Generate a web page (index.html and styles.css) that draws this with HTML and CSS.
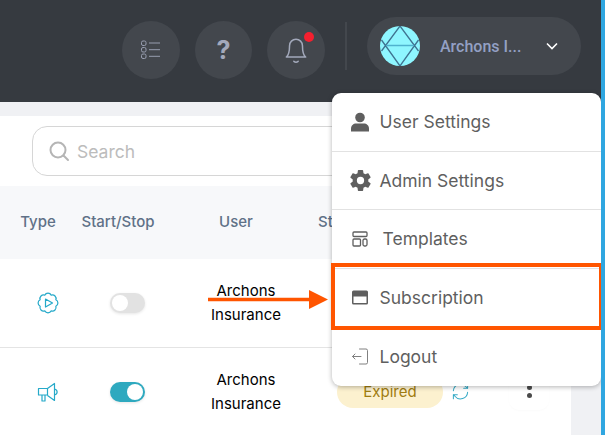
FILE: index.html
```html
<!DOCTYPE html>
<html lang="en">
<head>
<meta charset="UTF-8" />
<title>Campaigns</title>
<link rel="stylesheet" href="styles.css">
</head>
<body>

<div class="page">

  <!-- top bar -->
  <div class="topbar">
    <div class="round-btn">
      <svg width="24" height="24" viewBox="0 0 24 24" fill="none" stroke="#989eb0" stroke-width="1">
        <rect x="2.500" y="3" width="4.500" height="4.500" rx="1.500"/>
        <rect x="2.500" y="9.500" width="4.500" height="4.500" rx="1.500"/>
        <rect x="2.500" y="16" width="4.500" height="4.500" rx="1.500"/>
        <path d="M10 5h11M10 11.700h11M10 18.300h11"/>
      </svg>
    </div>
    <div class="round-btn help">?</div>
    <div class="round-btn">
      <svg width="26" height="28" viewBox="0 0 24 26" fill="none" stroke="#a3a9bb" stroke-width="1.400" stroke-linecap="round" stroke-linejoin="round">
        <path d="M6 9a6 6 0 0 1 12 0c0 6 1 9 3 10.500H3C5 18 6 15 6 9Z"/>
        <path d="M10 23.500c1 .8 3 .8 4 0"/>
      </svg>
      <span class="dot"></span>
    </div>
    <div class="divider"></div>
    <div class="account">
      <svg class="avatar" width="40" height="40" viewBox="0 0 40 40">
        <circle cx="20" cy="20" r="20" fill="#8ef6ff"/>
        <path d="M20 0 1.500 25M20 0l18.500 25M20 40 1.500 14M20 40l18.500-26" stroke="#3f7391" stroke-width="1.300" fill="none"/>
        <path d="M6 19.500h28" stroke="#4fb2cf" stroke-width="1.500"/>
      </svg>
      <span class="account-name">Archons I...</span>
      <svg width="12" height="8" viewBox="0 0 12 8" fill="none" stroke="#fff" stroke-width="1.600">
        <path d="M1 1.500l5 5 5-5"/>
      </svg>
    </div>
  </div>

  <div class="content">
    <div class="card">
      <div class="search-row">
        <div class="search">
          <svg width="22" height="22" viewBox="0 0 22 22" fill="none" stroke="#b5b5b5" stroke-width="2" stroke-linecap="round">
            <circle cx="10" cy="10" r="7.500"/>
            <path d="M15.500 15.500l4.500 4.500"/>
          </svg>
          <span>Search</span>
        </div>
      </div>

      <div class="row head">
        <div class="col-type">Type</div>
        <div class="col-toggle">Start/Stop</div>
        <div class="col-user">User</div>
        <div class="col-status">Status</div>
      </div>

      <div class="row">
        <div class="col-type">
          <svg width="24" height="24" viewBox="0 0 24 24" fill="none" stroke="#25a9c9" stroke-width="1.200" stroke-linejoin="round">
            <path d="M15.250 4.150A3.600 3.600 0 0 1 19.850 8.750 3.600 3.600 0 0 1 19.850 15.250 3.600 3.600 0 0 1 15.250 19.850 3.600 3.600 0 0 1 8.750 19.850 3.600 3.600 0 0 1 4.150 15.250 3.600 3.600 0 0 1 4.150 8.750 3.600 3.600 0 0 1 8.750 4.150 3.600 3.600 0 0 1 15.250 4.150Z"/>
            <path d="M9.500 8l7 4-7 4z"/>
          </svg>
        </div>
        <div class="col-toggle"><div class="toggle"></div></div>
        <div class="col-user">Archons<br>Insurance</div>
      </div>

      <div class="row">
        <div class="col-type">
          <svg width="22" height="22" viewBox="0 0 22 22" fill="none" stroke="#25a9c9" stroke-width="1.200" stroke-linejoin="round">
            <path d="M1.500 7.500h9v6.500h-9zM10.500 7.500l7-5v17l-7-5M5 14v6h3v-6M17.500 8c3.500 1 3.500 5 0 6"/>
          </svg>
        </div>
        <div class="col-toggle"><div class="toggle on"></div></div>
        <div class="col-user">Archons<br>Insurance</div>
        <div class="col-status">
          <span class="pill">Expired</span>
          <svg width="19" height="19" viewBox="0 0 24 24" fill="none" stroke="#35aac6" stroke-width="1.300" stroke-linecap="round" stroke-linejoin="round">
            <path d="M3 11a9 9 0 0 1 16-5l2 2M21 3v5h-5M21 13a9 9 0 0 1-16 5l-2-2M3 21v-5h5"/>
          </svg>
          <div class="more"><i></i><i></i></div>
        </div>
      </div>
    </div>
    <div class="gutter"></div>
  </div>

  <!-- account dropdown -->
  <div class="menu">
    <div class="menu-item">
      <svg width="20" height="20" viewBox="0 0 20 20" fill="#5f5f5f">
        <circle cx="10" cy="5.500" r="4.800"/>
        <path d="M1 19.500v-3c0-3 2.500-5 5-5h8c2.500 0 5 2 5 5v3z"/>
      </svg>
      <span>User Settings</span>
    </div>
    <div class="menu-item">
      <svg class="gear" width="25" height="25" viewBox="0 0 24 24" fill="#5f5f5f">
        <path d="M12 15.500A3.500 3.500 0 0 1 8.500 12 3.500 3.500 0 0 1 12 8.500a3.500 3.500 0 0 1 3.500 3.500 3.500 3.500 0 0 1-3.500 3.500m7.430-2.530c.04-.32.07-.64.07-.97s-.03-.66-.07-1l2.110-1.630c.19-.15.24-.42.12-.64l-2-3.460c-.12-.22-.39-.31-.61-.22l-2.490 1c-.52-.39-1.060-.73-1.690-.98l-.37-2.650A.506.506 0 0 0 14 2h-4c-.25 0-.46.18-.5.42l-.37 2.650c-.63.25-1.170.59-1.690.98l-2.490-1c-.22-.09-.49 0-.61.22l-2 3.460c-.13.22-.07.49.12.64L4.570 11c-.04.34-.07.67-.07 1s.03.65.07.97l-2.110 1.660c-.19.15-.25.42-.12.64l2 3.460c.12.22.39.3.61.22l2.490-1.010c.52.4 1.060.74 1.690.99l.37 2.650c.04.24.25.42.5.42h4c.25 0 .46-.18.5-.42l.37-2.650c.63-.26 1.170-.59 1.690-.99l2.490 1.010c.22.08.49 0 .61-.22l2-3.460c.12-.22.07-.49-.12-.64l-2.110-1.660Z"/>
      </svg>
      <span>Admin Settings</span>
    </div>
    <div class="menu-item templates">
      <svg width="16" height="16" viewBox="0 0 16 16" fill="none" stroke="#5f5f5f" stroke-width="1.300">
        <rect x="1" y="1" width="14" height="4.500" rx="1"/>
        <rect x="1" y="8" width="7.500" height="7" rx="1"/>
        <rect x="11" y="8" width="4" height="7" rx="1.500"/>
      </svg>
      <span>Templates</span>
    </div>
    <div class="menu-item">
      <svg width="17" height="15" viewBox="0 0 17 15" fill="#5f5f5f">
        <path fill-rule="evenodd" d="M2 .5h13a1.500 1.500 0 0 1 1.500 1.500v11a1.500 1.500 0 0 1-1.500 1.500H2A1.500 1.500 0 0 1 .5 13V2A1.500 1.500 0 0 1 2 .5Zm0 6v6.500h13V6.500Z"/>
      </svg>
      <span>Subscription</span>
    </div>
    <div class="menu-item">
      <svg width="17" height="17" viewBox="0 0 17 17" fill="none" stroke="#808080" stroke-width="1" stroke-linecap="round" stroke-linejoin="round">
        <path d="M8 1h6.500a1.500 1.500 0 0 1 1.500 1.500v12a1.500 1.500 0 0 1-1.500 1.500H8M9.500 8.500H1M3.500 6 1 8.500 3.500 11"/>
      </svg>
      <span>Logout</span>
    </div>
  </div>

  <!-- annotation drawn over the screenshot -->
  <div class="highlight"></div>
  <svg class="pointer" width="120" height="19" viewBox="0 0 120 19" fill="#ff5500">
    <path d="M0 7.700h101V0l19 9.500-19 9.500v-7.700H0z"/>
  </svg>

</div>

</body>
</html>
```

FILE: styles.css
```css
* {
  box-sizing: border-box;
}
body {
  margin: 0;
  font-family: Inter, "Noto Sans", sans-serif;
  background: #fff;
}
.page {
  position: relative;
  width: 605px;
  height: 435px;
  overflow: hidden;
  border-right: 4px solid #2fa6e0;
  display: flex;
  flex-direction: column;
}

/* top bar */
.topbar {
  height: 102px;
  flex-shrink: 0;
  background: #363a40;
  display: flex;
  align-items: flex-start;
  justify-content: flex-end;
  padding: 17px 20px 0 0;
}
.round-btn {
  position: relative;
  width: 58px;
  height: 58px;
  margin: 4px 0 0 15px;
  border-radius: 50%;
  background: #43474d;
  display: flex;
  align-items: center;
  justify-content: center;
}
.help {
  width: 57px;
  color: #a3a9bb;
  font-size: 25px;
  font-weight: 700;
}
.dot {
  position: absolute;
  top: 11px;
  right: 11px;
  width: 10px;
  height: 10px;
  border-radius: 50%;
  background: #f5202f;
}
.divider {
  width: 2px;
  height: 48px;
  margin: 5px 20px 0;
  background: #43474d;
}
.account {
  width: 214px;
  height: 58px;
  border-radius: 29px;
  background: #43474d;
  display: flex;
  align-items: center;
  padding-left: 13px;
}
.avatar {
  margin-right: 20px;
}
.account-name {
  width: 106px;
  color: #93a0c4;
  font-family: Roboto, sans-serif;
  font-size: 16px;
  font-weight: 500;
}

/* main area */
.content {
  flex: 1;
  display: flex;
  padding-top: 14px;
  background: #f0f1f4;
}
.card {
  flex: 1;
  background: #fff;
}
.gutter {
  width: 30px;
}
.search-row {
  height: 70px;
  padding: 10px 0 0 32px;
}
.search {
  width: 500px;
  height: 50px;
  border: 1px solid #d6d6d6;
  border-radius: 15px;
  display: flex;
  align-items: center;
  gap: 7px;
  padding-left: 15px;
  color: #bcbcbc;
  font-size: 17.500px;
}

/* table */
.row {
  height: 89px;
  padding-left: 10px;
  display: flex;
  align-items: center;
  color: #000;
  font-size: 15px;
  line-height: 24px;
  border-bottom: 1px solid #e4e4e4;
}
.row:last-child {
  height: 87px;
  border-bottom: 0;
}
.head {
  height: 73px;
  padding: 0 0 2px;
  background: #f7f8fa;
  color: #5f7187;
  font-weight: 500;
  border-bottom: 0;
}
.col-type,
.col-toggle,
.col-user {
  display: flex;
  justify-content: center;
  text-align: center;
}
.col-type {
  width: 76px;
}
.col-toggle {
  width: 84px;
}
.col-user {
  width: 152px;
}
.head .col-user {
  display: block;
}
.col-status {
  margin-left: 6px;
  display: flex;
  align-items: center;
}
.row:last-child .col-status {
  margin-left: 15px;
}
.toggle {
  position: relative;
  width: 35px;
  height: 20px;
  margin-right: 2px;
  border-radius: 10px;
  background: #e2e2e2;
  box-shadow: 0 1px 3px rgba(0,0,0,0.1);
}
.toggle::after {
  content: "";
  position: absolute;
  top: 2px;
  left: 2px;
  width: 16px;
  height: 16px;
  border-radius: 50%;
  background: #fff;
}
.toggle.on {
  background: #2ea9bf;
}
.toggle.on::after {
  left: 17px;
}
.pill {
  width: 106px;
  height: 32px;
  margin-right: 8px;
  border-radius: 16px;
  background: #fcf1cf;
  color: #a07c10;
  display: flex;
  align-items: center;
  justify-content: center;
}
.more {
  width: 40px;
  height: 36px;
  margin-left: 39px;
  border-radius: 10px;
  box-shadow: 0 1px 2px rgba(0,0,0,0.02);
  display: flex;
  flex-direction: column;
  align-items: center;
  justify-content: center;
  gap: 3px;
}
.more i {
  width: 5px;
  height: 5px;
  border-radius: 50%;
  background: #4a4a4a;
}

/* dropdown */
.menu {
  position: absolute;
  top: 93px;
  left: 332px;
  width: 269px;
  height: 292.500px;
  background: #fff;
  border-radius: 9px;
  box-shadow: 0 1px 5px rgba(0,0,0,0.3);
  display: flex;
  flex-direction: column;
}
.menu-item {
  height: 58.500px;
  flex-shrink: 0;
  display: flex;
  align-items: center;
  padding-left: 19px;
  border-bottom: 1px solid #e2e2e2;
  color: #5f5f5f;
  font-size: 17.500px;
}
.menu-item:last-child {
  border-bottom: 0;
}
.menu-item svg {
  width: 22px;
  margin: 0 8.500px 0 -2px;
}
.menu-item .gear {
  width: 25px;
  margin: 0 7px 0 -3.500px;
}
.menu-item.templates span {
  margin-left: 3px;
}
.highlight {
  position: absolute;
  top: 263px;
  left: 331px;
  width: 272px;
  height: 67px;
  border: 4px solid #ff5500;
}
.pointer {
  position: absolute;
  top: 290px;
  left: 208px;
}
```
